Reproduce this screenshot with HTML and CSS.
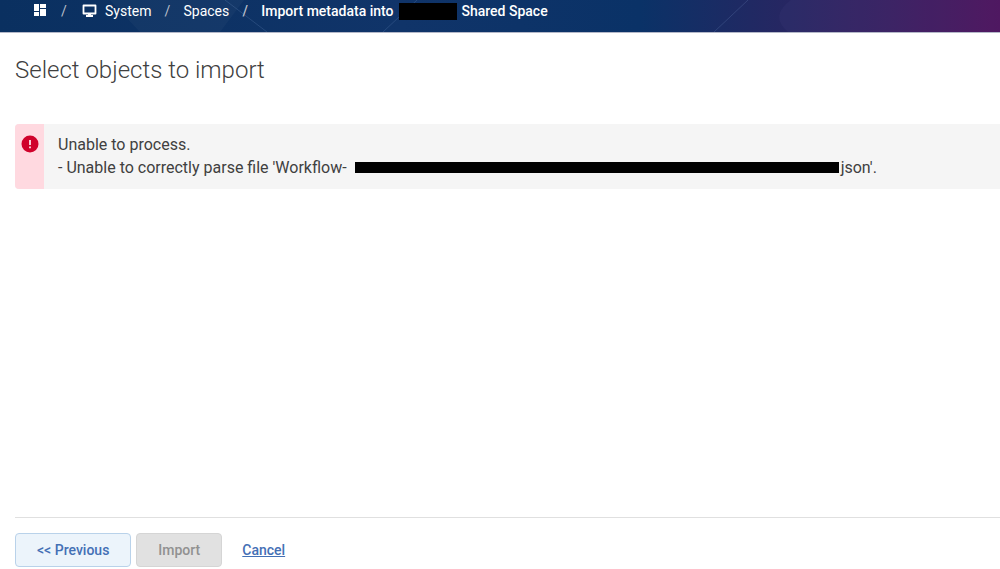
FILE: index.html
```
<!DOCTYPE html>
<html lang="en">
<head>
  <meta charset="UTF-8" />
  <meta name="viewport" content="width=device-width, initial-scale=1.0" />
  <title>Import metadata</title>
  <link rel="stylesheet" href="styles.css">
</head>
<body>
  <header class="topbar">
    <svg class="topbar-art" width="1000" height="32" viewBox="0 0 1000 32" aria-hidden="true">
      <path d="M110 0l30 32h80l24-32z" fill="#fff" opacity=".03"/>
      <path d="M225 0l42 32M417 0l-34 32M748 0l-34 32" stroke="#8fb0e0" opacity=".18"/>
      <path d="M791 0q-22 16-3 32h212V0z" fill="#6a6aa0" opacity=".08"/>
    </svg>
    <nav aria-label="Breadcrumb">
      <ol class="breadcrumb">
        <li class="home">
          <a href="#" aria-label="Home">
            <svg width="12" height="12" viewBox="0 0 12 12" fill="#fff">
              <path d="M0 0h5v7H0zM6 0h6v4H6zM0 8h5v4H0zM6 5h6v7H6z"/>
            </svg>
          </a>
        </li>
        <li>
          <a href="#">
            <svg width="15" height="14" viewBox="0 0 15 14">
              <path d="M1.500 1.500h12v8h-12z" fill="none" stroke="#fff" stroke-width="1.800" stroke-linejoin="round"/>
              <path d="M6 9.500h3v1.600h2V13H4v-1.900h2z" fill="#fff"/>
            </svg>
            System
          </a>
        </li>
        <li><a href="#">Spaces</a></li>
        <li class="current" aria-current="page">Import metadata into <span class="redacted name"></span> Shared Space</li>
      </ol>
    </nav>
  </header>

  <main>
    <h1>Select objects to import</h1>
    <div class="alert" role="alert">
      <div class="alert-icon">
        <svg width="18" height="18" viewBox="0 0 18 18">
          <circle cx="9" cy="9" r="8.500" fill="#d0022b"/>
          <path d="M9 5v5M9 11.500v1.700" stroke="#fff" stroke-width="1.600"/>
        </svg>
      </div>
      <p class="alert-text">
        Unable to process.<br>
        - Unable to correctly parse file 'Workflow-<span class="redacted file"></span>json'.
      </p>
    </div>
  </main>

  <footer class="actions">
    <button type="button" class="btn">&lt;&lt; Previous</button>
    <button type="button" class="btn" disabled>Import</button>
    <a href="#" class="cancel">Cancel</a>
  </footer>
</body>
</html>
```
FILE: styles.css
```
* {
  box-sizing: border-box;
}
body {
  margin: 0;
  min-height: 100vh;
  display: flex;
  flex-direction: column;
  font-family: Roboto, "Liberation Sans", sans-serif;
  font-size: 16px;
  color: #404040;
  background: #fff;
}
.topbar {
  position: relative;
  height: 33px;
  padding-left: 34px;
  border-bottom: 1px solid #b4b8c8;
  background: linear-gradient(90deg, #0a3060 0%, #103469 40%, #0a3267 64%, #202963 75%, #391f60 89%, #4e125c 100%);
  overflow: hidden;
}
.topbar-art {
  position: absolute;
  top: 0;
  left: 0;
}
.breadcrumb {
  position: relative;
  display: flex;
  margin: 0;
  padding: 0;
  list-style: none;
  font-size: 14px;
  line-height: 22px;
  color: #fff;
  white-space: nowrap;
}
.breadcrumb li {
  display: flex;
  align-items: center;
}
.breadcrumb li + li::before {
  content: "/";
  width: 32px;
  text-align: center;
  color: #b9bfca;
}
.breadcrumb .home + li::before {
  width: 36px;
}
.breadcrumb a {
  display: flex;
  align-items: center;
  gap: 8px;
  color: #fff;
  text-decoration: none;
}
.breadcrumb .home svg {
  margin-bottom: 2px;
}
.breadcrumb .current {
  font-weight: 500;
}
.redacted {
  display: inline-block;
  background: #000;
}
.redacted.name {
  width: 58px;
  height: 17px;
  margin: 0 4px 0 6px;
}
.redacted.file {
  width: 484px;
  height: 11px;
  margin: 0 2px 0 8px;
}
main {
  flex: 1;
  padding-left: 15px;
}
h1 {
  margin: 21px 0 37px;
  font-size: 24px;
  font-weight: 300;
  line-height: 33px;
}
.alert {
  display: flex;
  border-radius: 4px 0 0 4px;
  background: #f5f5f5;
  overflow: hidden;
}
.alert-icon {
  width: 29px;
  padding-top: 11px;
  text-align: center;
  background: #ffd9e0;
}
.alert-text {
  margin: 0;
  padding: 9px 14px 10px;
  line-height: 23px;
}
.actions {
  display: flex;
  align-items: center;
  margin-left: 15px;
  padding: 15px 0 2px;
  border-top: 1px solid #e0e0e0;
}
.btn {
  height: 34px;
  margin-right: 5px;
  padding: 0 21px;
  border: 1px solid #b9d2ea;
  border-radius: 4px;
  background: #ecf4fb;
  color: #4470b5;
  font: 500 14px Roboto, "Liberation Sans", sans-serif;
}
.btn:disabled {
  border-color: #d5d5d5;
  background: #e1e1e1;
  color: #919191;
}
.cancel {
  margin-left: 15px;
  color: #4470b5;
  font-size: 14px;
  font-weight: 500;
}
```
